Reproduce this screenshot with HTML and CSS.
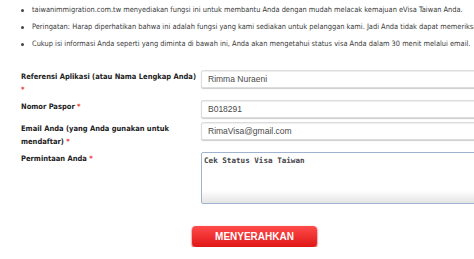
FILE: index.html
```html
<!DOCTYPE html>
<html lang="id">
<head>
  <meta charset="UTF-8">
  <title>Cek Status eVisa Taiwan</title>
  <link rel="stylesheet" href="styles.css">
</head>
<body>

  <!-- info -->
  <ul class="info">
    <li>taiwanimmigration.com.tw menyediakan fungsi ini untuk membantu Anda dengan mudah melacak kemajuan eVisa Taiwan Anda.</li>
    <li>Peringatan: Harap diperhatikan bahwa ini adalah fungsi yang kami sediakan untuk pelanggan kami. Jadi Anda tidak dapat memeriksa</li>
    <li>Cukup isi informasi Anda seperti yang diminta di bawah ini, Anda akan mengetahui status visa Anda dalam 30 menit melalui email.</li>
  </ul>

  <!-- form -->
  <form class="status-form">
    <label class="lbl nowrap">Referensi Aplikasi (atau Nama Lengkap Anda)<br><span class="req">*</span></label>
    <input class="field" type="text" value="Rimma Nuraeni">

    <label class="lbl">Nomor Paspor <span class="req">*</span></label>
    <input class="field" type="text" value="B018291">

    <label class="lbl">Email Anda (yang Anda gunakan untuk mendaftar) <span class="req">*</span></label>
    <input class="field" type="text" value="RimaVisa@gmail.com">

    <label class="lbl">Permintaan Anda <span class="req">*</span></label>
    <textarea class="area">Cek Status Visa Taiwan</textarea>

    <div class="actions">
      <button type="button" class="submit">MENYERAHKAN</button>
    </div>
  </form>

</body>
</html>
```

FILE: styles.css
```css
    body {
      margin: 0;
      background: #fff;
      font-family: 'DejaVu Sans', sans-serif;
      color: #3a3a3a;
      overflow: hidden;
    }

    .info {
      margin: 0;
      padding: 3px 0 0 32px;
      list-style: none;
      font-size: 7.4px;
      font-stretch: condensed;
      white-space: nowrap;
    }

    .info li {
      position: relative;
      height: 17px;
      line-height: 14px;
    }

    .info li::before {
      content: "";
      position: absolute;
      left: -11px;
      top: 6px;
      width: 3px;
      height: 3px;
      border-radius: 50%;
      background: #444;
    }

    .status-form {
      display: grid;
      grid-template-columns: 180px 300px;
      row-gap: 4px;
      padding: 16px 0 0 21px;
    }

    .lbl {
      font-size: 7.5px;
      font-weight: bold;
      font-stretch: condensed;
      color: #222;
      line-height: 12.5px;
      padding-top: 1px;
      padding-right: 6px;
    }

    .nowrap {
      white-space: nowrap;
    }

    .req {
      color: #e33;
    }

    .field {
      box-sizing: border-box;
      height: 18px;
      margin: 0;
      padding: 0 6px;
      border: 1px solid #ddd;
      border-radius: 2px;
      box-shadow: inset 0 1px 1px #eee, 0 1px 1px #ccc;
      font-family: 'Liberation Sans', Arial, sans-serif;
      font-size: 8.5px;
      color: #4a4a4a;
    }

    .area {
      box-sizing: border-box;
      height: 52px;
      margin: 0;
      padding: 3px 2px;
      border: 1px solid #9fb3d1;
      border-radius: 2px;
      background: linear-gradient(to bottom, #fff 0%, #fff 75%, #e4e4e4 100%);
      font-family: 'DejaVu Sans Mono', monospace;
      font-size: 7.6px;
      font-weight: bold;
      color: #444;
      resize: none;
    }

    .actions {
      grid-column: 1 / 3;
      padding: 17px 0 0 171px;
    }

    .submit {
      width: 125px;
      height: 21px;
      border: none;
      border-radius: 4px;
      background: linear-gradient(to bottom, #ff4b4b, #e01616);
      box-shadow: 0 1px 2px #b00;
      color: #fff;
      font-family: 'Liberation Sans', Arial, sans-serif;
      font-weight: bold;
      font-size: 10px;
      cursor: pointer;
    }
```
